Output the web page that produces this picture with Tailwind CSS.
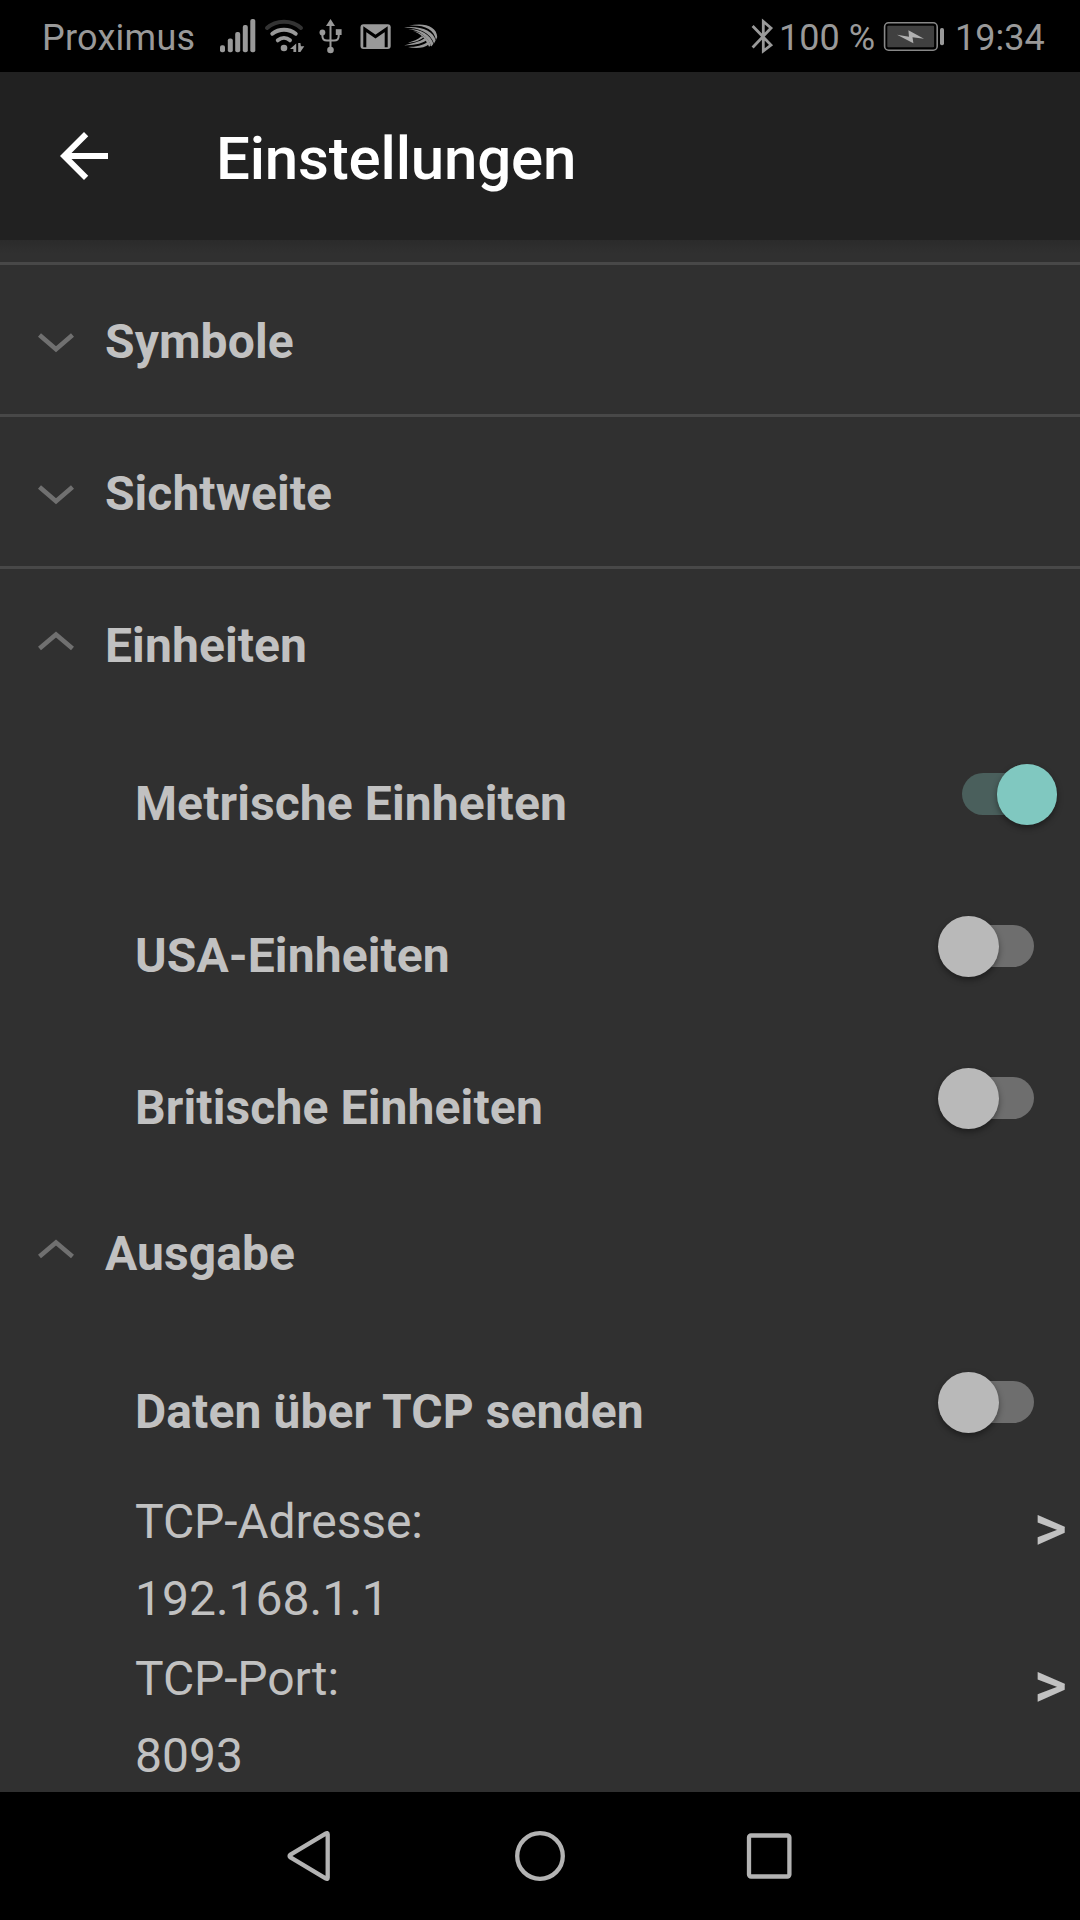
<!DOCTYPE html>
<html lang="de">
<head>
<meta charset="utf-8">
<title>Einstellungen</title>
<script src="https://cdn.jsdelivr.net/npm/@tailwindcss/browser@4"></script>
</head>
<body class="w-[1080px] h-[1920px] overflow-hidden bg-[#303030] font-[Roboto,sans-serif] text-5xl text-[#c1c1c1] flex flex-col">

<!-- Status bar -->
<div class="h-[72px] shrink-0 bg-black text-[#999] text-4xl flex items-center justify-between">
  <div class="flex items-center">
    <span class="w-[210px] pl-[42px] pt-[3px] leading-[42px] tracking-[0.25px] whitespace-nowrap">Proximus</span>
    <svg class="w-[240px] h-[72px]" viewBox="210 0 240 72" fill="#999">
      <rect x="220" y="45.3" width="5" height="7" rx="2"/>
      <rect x="227.8" y="38.5" width="5" height="13.8" rx="2"/>
      <rect x="235.2" y="32" width="5" height="20.3" rx="2"/>
      <rect x="242.8" y="25" width="5" height="27.3" rx="2"/>
      <rect x="250.3" y="19" width="5" height="33.3" rx="2"/>
      <g fill="none" stroke-width="4" stroke-linecap="round">
        <path d="M267 28C276 19.5 292 19.5 301 28" stroke="#333"/>
        <path d="M272.3 33.7C279 28.3 289 28.3 295.7 33.7" stroke="#999"/>
        <path d="M277.8 40.3C281.5 37.3 286.5 37.3 290 40.3" stroke="#999"/>
      </g>
      <circle cx="284" cy="48" r="3.3"/>
      <path d="M296.2 43.5V52H293.4V49H290ZM298.2 43H300.4L300.9 46.2H304.3L300.4 52H298.2Z"/>
      <path d="M330.5 19L335 26H326Z"/>
      <circle cx="330.5" cy="50" r="3.3"/>
      <circle cx="322.4" cy="32.5" r="2.9"/>
      <rect x="335.8" y="29.2" width="5.8" height="5.8"/>
      <path d="M330.5 25V49M322.4 33V36Q322.4 40.5 327 40.5H334Q338.7 40.5 338.7 36V33" fill="none" stroke="#999" stroke-width="2"/>
      <rect x="360.5" y="24.3" width="30.2" height="24.8" rx="3"/>
      <path d="M364.8 47.2V29.2L375.5 36.6L386.2 29.2V47.2" fill="none" stroke="#000" stroke-width="3"/>
      <path d="M409 25.6C424 22.2 436.8 26 437.2 37L436 40C434 29 424 24.6 409 25.6Z"/>
      <path d="M404 27.4C420 25.4 433.5 30.5 435.6 40.5L434 43.6C430.5 32.5 419 27.6 404 27.4Z"/>
      <path d="M408.5 28.9C420 28.7 431 34.5 433.4 43.8L431.4 46.4C427.5 36 419 30.5 408.5 28.9Z"/>
      <path d="M413 31C421.5 32.4 429 38.2 430.8 45.4L429 46.8C425.5 38 420 33.5 413 31Z"/>
      <path d="M404 45.5C411 43 420 42 424.5 38.2L426.2 40.6C421 44.4 412 45.3 404 45.5Z"/>
      <path d="M408 47C416 46.8 423 45.6 427.4 42L428.9 44.2C424 48.5 415 48.8 408 47Z"/>
      <path d="M408 42.8C413 41 418 39.8 421.5 36.2L423.3 37.4C419 41.2 413 42.2 408 42.8Z"/>
    </svg>
  </div>
  <div class="flex items-center">
    <svg class="w-[30px] h-[72px]" viewBox="748 0 30 72" fill="none" stroke="#999" stroke-width="2.8">
      <path d="M752.6 26L771 45L763.3 51V21.5L771 28L752.6 47.5"/>
    </svg>
    <span class="w-[98px] pl-[1px] pt-[3px] leading-[42px] whitespace-nowrap">100 %</span>
    <svg class="w-[78px] h-[72px]" viewBox="876 0 78 72">
      <rect x="884.6" y="22.8" width="52.6" height="27.4" rx="4" fill="none" stroke="#888" stroke-width="1.6"/>
      <rect x="887.3" y="25.8" width="46.8" height="21.4" rx="1" fill="#404040"/>
      <path d="M897 34.7L909 36.8L908.4 30.3L924 38.8L912.5 37.2L913.4 43.2Z" fill="#b0b0b0"/>
      <rect x="940" y="28" width="4" height="17.3" rx="1.8" fill="#999"/>
    </svg>
    <span class="w-[126px] pl-[1px] pt-[3px] leading-[42px] whitespace-nowrap">19:34</span>
  </div>
</div>

<!-- App bar -->
<header class="h-[168px] shrink-0 bg-[#212121] text-white flex items-center pl-12">
  <svg class="size-[72px]" viewBox="0 0 24 24" fill="currentColor"><path d="M20 11H7.83l5.59-5.59L12 4l-8 8 8 8 1.41-1.41L7.83 13H20v-2z"/></svg>
  <h1 class="ml-24 pt-1.5 text-6xl leading-[72px] font-medium tracking-[-0.17px]">Einstellungen</h1>
</header>

<!-- Settings list -->
<main class="h-[1552px] shrink-0 leading-[56px] flex flex-col">
  <div class="h-[22px] bg-linear-to-b from-[#2b2b2b] to-[#303030] to-60%"></div>

  <section class="h-[152px] border-t-3 border-[#484848] flex items-start pt-[49px] font-bold tracking-[0.1px]">
    <svg class="w-[105px] h-[56px]" viewBox="0 0 105 56" fill="none" stroke="#707070" stroke-width="4.6"><path d="M39.5 21L56 35.2L72.5 21"/></svg>
    <h2>Symbole</h2>
  </section>
  <section class="h-[152px] border-t-3 border-[#484848] flex items-start pt-[49px] font-bold tracking-[0.05px]">
    <svg class="w-[105px] h-[56px]" viewBox="0 0 105 56" fill="none" stroke="#707070" stroke-width="4.6"><path d="M39.5 21L56 35.2L72.5 21"/></svg>
    <h2>Sichtweite</h2>
  </section>

  <section class="font-bold tracking-[0.1px]">
    <div class="h-[152px] border-t-3 border-[#484848] flex items-start pt-[49px]">
      <svg class="w-[105px] h-[56px]" viewBox="0 0 105 56" fill="none" stroke="#707070" stroke-width="4.6"><path d="M39.5 30.5L56 16.5L72.5 30.5"/></svg>
      <h2>Einheiten</h2>
    </div>
    <div class="h-[152px] flex items-start justify-between pl-[135px] pr-[22px]">
      <span class="pt-[58px]">Metrische Einheiten</span>
      <div class="relative w-24 h-[61px] mt-[46px] flex items-start justify-start pt-[9px]">
        <div class="w-[78px] h-[42px] rounded-full bg-[#4a5f5c]"></div>
        <div class="absolute right-px top-0 w-[60px] h-[61px] rounded-full bg-[#80c8c0] shadow-[0_3px_6px_rgba(0,0,0,0.4)]"></div>
      </div>
    </div>
    <div class="h-[152px] flex items-start justify-between pl-[135px] pr-[46px]">
      <span class="pt-[58px]">USA-Einheiten</span>
      <div class="relative w-24 h-[61px] mt-[46px] flex items-start justify-end pt-[9px]">
        <div class="w-[78px] h-[42px] rounded-full bg-[#6e6e6e]"></div>
        <div class="absolute left-0 top-0 size-[61px] rounded-full bg-[#b9b9b9] shadow-[0_3px_6px_rgba(0,0,0,0.4)]"></div>
      </div>
    </div>
    <div class="h-[152px] flex items-start justify-between pl-[135px] pr-[46px]">
      <span class="pt-[58px] tracking-[0.13px]">Britische Einheiten</span>
      <div class="relative w-24 h-[61px] mt-[46px] flex items-start justify-end pt-[9px]">
        <div class="w-[78px] h-[42px] rounded-full bg-[#6e6e6e]"></div>
        <div class="absolute left-0 top-0 size-[61px] rounded-full bg-[#b9b9b9] shadow-[0_3px_6px_rgba(0,0,0,0.4)]"></div>
      </div>
    </div>
  </section>

  <section>
    <div class="h-[152px] flex items-start pt-[52px] font-bold tracking-[0.05px]">
      <svg class="w-[105px] h-[56px]" viewBox="0 0 105 56" fill="none" stroke="#707070" stroke-width="4.6"><path d="M39.5 30.5L56 16.5L72.5 30.5"/></svg>
      <h2>Ausgabe</h2>
    </div>
    <div class="h-[152px] flex items-start justify-between pl-[135px] pr-[46px] font-bold tracking-[0.1px]">
      <span class="pt-[58px]">Daten über TCP senden</span>
      <div class="relative w-24 h-[61px] mt-[46px] flex items-start justify-end pt-[9px]">
        <div class="w-[78px] h-[42px] rounded-full bg-[#6e6e6e]"></div>
        <div class="absolute left-0 top-0 size-[61px] rounded-full bg-[#b9b9b9] shadow-[0_3px_6px_rgba(0,0,0,0.4)]"></div>
      </div>
    </div>
    <div class="h-[157px] flex items-start justify-between pl-[135px] pr-[13px] pt-4">
      <div class="flex flex-col gap-[21px]"><span class="tracking-[-0.1px]">TCP-Adresse:</span><span>192.168.1.1</span></div>
      <span class="pt-[7px] text-[64px] leading-[56px] font-medium">&gt;</span>
    </div>
    <div class="h-[157px] flex items-start justify-between pl-[135px] pr-[13px] pt-4">
      <div class="flex flex-col gap-[21px]"><span class="tracking-[-0.1px]">TCP-Port:</span><span>8093</span></div>
      <span class="pt-[7px] text-[64px] leading-[56px] font-medium">&gt;</span>
    </div>
  </section>
</main>

<!-- Navigation bar -->
<nav class="h-32 shrink-0 bg-black flex items-center">
  <svg class="w-[1080px] h-32" viewBox="0 1792 1080 128" fill="none" stroke="#b3b3b3" stroke-width="4.3" stroke-linejoin="round">
    <path d="M327.7 1834.3Q327.7 1832.3 325.6 1833.6L290.5 1854.6Q288.6 1856 290.5 1857.4L325.6 1878.4Q327.7 1879.7 327.7 1877.7Z"/>
    <circle cx="540" cy="1856" r="22.8"/>
    <rect x="749" y="1835.5" width="40.4" height="41" rx="2"/>
  </svg>
</nav>
</body>
</html>
